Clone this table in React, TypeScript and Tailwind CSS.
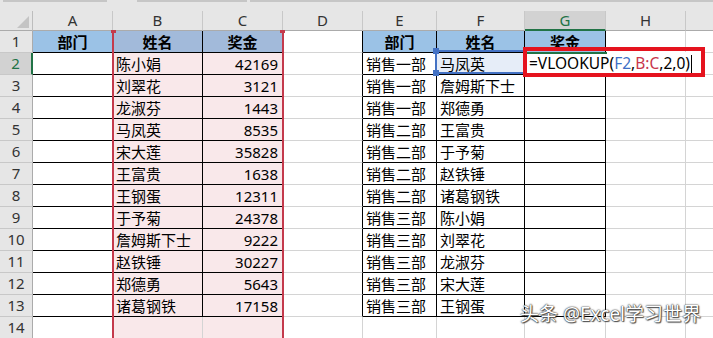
import React from "react";

const COLS = ["A", "B", "C", "D", "E", "F", "G", "H", "I"];

const BC: [string, number][] = [
  ["陈小娟", 42169],
  ["刘翠花", 3121],
  ["龙淑芬", 1443],
  ["马凤英", 8535],
  ["宋大莲", 35828],
  ["王富贵", 1638],
  ["王钢蛋", 12311],
  ["于予菊", 24378],
  ["詹姆斯下士", 9222],
  ["赵铁锤", 30227],
  ["郑德勇", 5643],
  ["诸葛钢铁", 17158],
];

const EF: [string, string][] = [
  ["销售一部", "马凤英"],
  ["销售一部", "詹姆斯下士"],
  ["销售一部", "郑德勇"],
  ["销售二部", "王富贵"],
  ["销售二部", "于予菊"],
  ["销售二部", "赵铁锤"],
  ["销售二部", "诸葛钢铁"],
  ["销售三部", "陈小娟"],
  ["销售三部", "刘翠花"],
  ["销售三部", "龙淑芬"],
  ["销售三部", "宋大莲"],
  ["销售三部", "王钢蛋"],
];

function Cell({ r, c }: { r: number; c: string }) {
  const t1 = r <= 13 && (c === "A" || c === "B" || c === "C");
  const t2 = r <= 13 && (c === "E" || c === "F" || c === "G");
  const rightBlack = t1 || t2 || (r <= 13 && c === "D");
  const bottomBlack = t1 || t2;

  let bg = "bg-white";
  if (r === 1 && (c === "A" || c === "E" || c === "F" || c === "G")) bg = "bg-[#9bc2e6]";
  else if (r === 1 && (c === "B" || c === "C")) bg = "bg-[#a2bada]";
  else if (c === "B" || c === "C") bg = "bg-[#f9e8ea]";
  if (r === 2 && c === "F") bg = "bg-[#e6edf8]";

  let text: React.ReactNode = null;
  let align = "justify-start pl-[3px]";
  let bold = "";
  if (r === 1) {
    const h: Record<string, string> = { A: "部门", B: "姓名", C: "奖金", E: "部门", F: "姓名", G: "奖金" };
    if (h[c]) {
      text = h[c];
      align = "justify-center";
      bold = "font-bold";
    }
  } else if (r >= 2 && r <= 13) {
    const i = r - 2;
    if (c === "B") text = BC[i][0];
    if (c === "C") {
      text = String(BC[i][1]);
      align = "justify-end pr-[4px]";
    }
    if (c === "E") text = EF[i][0];
    if (c === "F") text = EF[i][1];
  }

  return (
    <div
      className={`h-[22px] border-r border-b flex items-center overflow-hidden whitespace-nowrap text-[15px] leading-none text-black pt-[1px] ${
        rightBlack ? "border-r-black" : "border-r-[#d4d4d4]"
      } ${bottomBlack ? "border-b-black" : "border-b-[#d4d4d4]"} ${bg} ${align} ${bold}`}
    >
      {text}
    </div>
  );
}

export default function App() {
  const rows = Array.from({ length: 14 }, (_, i) => i + 1);
  return (
    <div className="relative w-[713px] h-[338px] overflow-hidden bg-white font-['Noto_Sans','Noto_Sans_CJK_SC',sans-serif]">
      {/* top strip */}
      <div className="h-[11px] bg-[#e6e6e6] flex">
        <div className="ml-[3px] w-[104px] h-[2px] bg-[#c6c6c6]" />
        <div className="ml-[30px] w-[110px] h-[2px] bg-[#c6c6c6]" />
        <div className="ml-[3px] flex-1 h-[2px] bg-[#c6c6c6]" />
      </div>

      <div className="grid grid-cols-[33px_80px_90px_80px_80px_74px_88px_81px_80px_80px]">
        {/* corner */}
        <div className="relative h-[20px] bg-[#e6e6e6] border-r border-b border-r-[#bdbdbd] border-b-[#ababab]">
          <div className="absolute right-[3px] bottom-[2px] w-0 h-0 border-l-[12px] border-l-transparent border-b-[12px] border-b-[#c4c4c4]" />
        </div>
        {COLS.map((c) => (
          <div
            key={c}
            className={`h-[20px] flex items-center justify-center text-[15px] leading-none border-r border-r-[#c8c8c8] ${
              c === "G"
                ? "bg-[#d2d2d2] text-[#217346] border-b-2 border-b-[#217346]"
                : "bg-[#e6e6e6] text-[#333] border-b border-b-[#ababab]"
            }`}
          >
            {c === "I" ? null : c}
          </div>
        ))}

        {rows.map((r) => (
          <React.Fragment key={r}>
            <div
              className={`h-[22px] flex items-center justify-center text-[15px] leading-none border-b border-b-[#c8c8c8] ${
                r === 2
                  ? "bg-[#d2d2d2] text-[#217346] border-r-2 border-r-[#217346]"
                  : "bg-[#e6e6e6] text-[#333] border-r border-r-[#ababab]"
              }`}
            >
              {r}
            </div>
            {COLS.map((c) => (
              <Cell key={c} r={r} c={c} />
            ))}
          </React.Fragment>
        ))}
      </div>

      {/* B:C reference highlight */}
      <div className="absolute left-[112px] top-[31px] w-[172px] h-[320px] border-x-2 border-[#c43a4c] pointer-events-none" />
      <div className="absolute left-[111px] top-[30px] w-[5px] h-[3px] bg-[#c43a4c]" />
      <div className="absolute left-[280px] top-[30px] w-[5px] h-[3px] bg-[#c43a4c]" />

      {/* F2 reference highlight */}
      <div className="absolute left-[435px] top-[50px] w-[92px] h-[24px] border-2 border-[#4472c4]" />
      <div className="absolute left-[433px] top-[48px] w-[6px] h-[6px] bg-[#4472c4]" />
      <div className="absolute left-[433px] top-[70px] w-[6px] h-[6px] bg-[#4472c4]" />

      {/* G2 edit cell */}
      <div className="absolute left-[525px] top-[52px] w-[176px] h-[22px] bg-white">
        <div className="absolute left-0 top-0 w-[82px] h-[2px] bg-[#217346]" />
        <div className="absolute left-0 top-0 w-[2px] h-[22px] bg-[#217346]" />
        <div className="absolute left-[4px] top-[3px] flex items-center text-[15.5px] leading-none text-black whitespace-nowrap h-[18px]">
          <span>=VLOOKUP(</span>
          <span className="text-[#3e6fc6]">F2</span>
          <span>,</span>
          <span className="text-[#c8374c]">B:C</span>
          <span>,2,0)</span>
          <span className="ml-[1px] w-[1px] h-[18px] bg-black" />
        </div>
      </div>

      {/* red annotation box */}
      <div className="absolute left-[523px] top-[47px] w-[182px] h-[30px] border-[4px] border-[#e5131e] pointer-events-none" />

      {/* watermark */}
      <div className="absolute left-[520px] top-[305px] text-[19px] leading-none text-white whitespace-nowrap [text-shadow:0_0_1px_#222,0_0_2px_#444,1px_1px_1px_#555]">
        头条 @Excel学习世界
      </div>
    </div>
  );
}
